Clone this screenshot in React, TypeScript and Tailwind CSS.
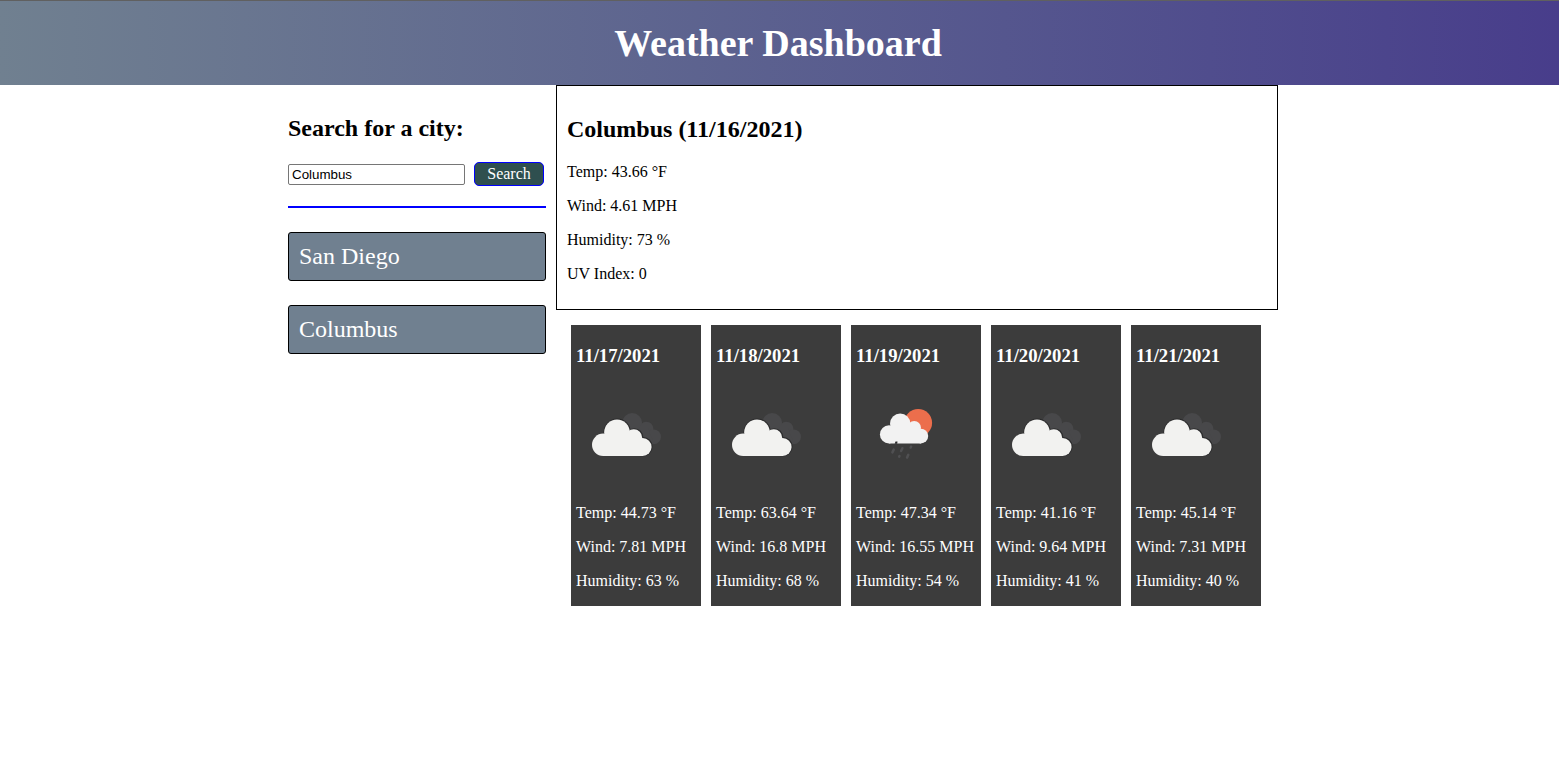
type Sky = "clouds" | "rain";

interface Forecast {
  date: string;
  sky: Sky;
  temp: string;
  wind: string;
  humidity: string;
}

const cities = ["San Diego", "Columbus"];

const current = ["Temp: 43.66 °F", "Wind: 4.61 MPH", "Humidity: 73 %", "UV Index: 0"];

const forecast: Forecast[] = [
  { date: "11/17/2021", sky: "clouds", temp: "44.73", wind: "7.81", humidity: "63" },
  { date: "11/18/2021", sky: "clouds", temp: "63.64", wind: "16.8", humidity: "68" },
  { date: "11/19/2021", sky: "rain", temp: "47.34", wind: "16.55", humidity: "54" },
  { date: "11/20/2021", sky: "clouds", temp: "41.16", wind: "9.64", humidity: "41" },
  { date: "11/21/2021", sky: "clouds", temp: "45.14", wind: "7.31", humidity: "40" },
];

function CloudsIcon() {
  return (
    <svg className="block size-[100px]" viewBox="0 0 100 100">
      <g fill="#48484a">
        <circle cx="56.2" cy="38.9" r="9.9" />
        <circle cx="70.4" cy="44.6" r="6.9" />
        <circle cx="77.6" cy="52.8" r="7.4" />
        <path d="M52 44H72L78 60H60Z" />
      </g>
      <g fill="#2a2a2b">
        <circle cx="41.2" cy="48" r="13.6" />
        <circle cx="58.2" cy="53.2" r="9" />
        <circle cx="67" cy="62.6" r="9.6" />
      </g>
      <g fill="#f2f2f0">
        <circle cx="27.2" cy="60.8" r="11.2" />
        <circle cx="41" cy="48.2" r="12.8" />
        <circle cx="57.8" cy="53.7" r="8.4" />
        <circle cx="66.6" cy="63" r="9" />
        <path d="M27 58L40 50H58L67 58V72H27Z" />
      </g>
    </svg>
  );
}

function RainIcon() {
  return (
    <svg className="block size-[100px]" viewBox="0 0 100 100">
      <circle cx="62.2" cy="38.8" r="13.9" fill="#ec6e4c" />
      <g fill="#f2f2f2">
        <circle cx="33" cy="50.4" r="9.1" />
        <circle cx="44.2" cy="39.7" r="10.2" />
        <circle cx="58.2" cy="43.8" r="6.8" />
        <circle cx="64.8" cy="52.1" r="7.4" />
        <path d="M33 46L43 41H58L65 48V59.5H33Z" />
      </g>
      <path d="M38.7 59.7L39.5 57.4H41.5L41.2 59.7Z" fill="#2a2a2b" />
      <g stroke="#505052" strokeWidth="2.5" strokeLinecap="round">
        <path d="M37.7 65.6L36.4 68.4" />
        <path d="M46.4 64.2L45.1 67" />
        <path d="M55.1 62.6L54.7 63.6" />
        <path d="M43.5 72L43.2 72.6" />
        <path d="M52.3 70.8L51.1 73.6" />
      </g>
    </svg>
  );
}

function ForecastCard({ day }: { day: Forecast }) {
  return (
    <article className="h-[281px] w-[130px] bg-[#3c3c3c] px-[5px] pt-5 text-white">
      <h3 className="h-[22px] text-[18.72px] leading-[22px] font-bold whitespace-nowrap">{day.date}</h3>
      <div className="mt-[17px] mb-5">{day.sky === "rain" ? <RainIcon /> : <CloudsIcon />}</div>
      <div className="flex flex-col gap-4 text-base leading-[18px] whitespace-nowrap">
        <p>Temp: {day.temp} °F</p>
        <p>Wind: {day.wind} MPH</p>
        <p>Humidity: {day.humidity} %</p>
      </div>
    </article>
  );
}

export default function App() {
  return (
    <div className="min-h-screen bg-white font-['Liberation_Serif','Times_New_Roman',serif] text-black">
      <header className="h-[85px] border-t border-[#606060] bg-linear-to-r from-[#708090] to-[#483d8b] pt-5 pr-[3px] text-center text-white">
        <h1 className="text-[38px] leading-[45px] font-bold">Weather Dashboard</h1>
      </header>
      <main className="flex gap-2.5 pl-72">
        <aside className="w-[258px] pt-[30px]">
          <h2 className="text-2xl leading-[27px] font-bold">Search for a city:</h2>
          <div className="mt-5 flex h-6 items-center gap-[9px]">
            <input
              className="mt-px h-[21px] w-[177px] rounded-[2px] border border-[#767676] bg-white px-[3px] font-['Liberation_Sans',Arial,sans-serif] text-[13.333px] outline-none"
              defaultValue="Columbus"
            />
            <button className="h-6 w-[70px] rounded-[5px] border border-[#0000ff] bg-[#2f4f4f] text-base leading-[22px] text-white">
              Search
            </button>
          </div>
          <hr className="mt-5 mb-6 border-0 border-t-2 border-[#0000ff]" />
          <ul className="flex flex-col gap-6">
            {cities.map((city) => (
              <li key={city} className="h-[49px] rounded-[3px] border border-black bg-[#708090] px-2.5 text-2xl leading-[47px] text-white">
                {city}
              </li>
            ))}
          </ul>
        </aside>
        <div className="w-[722px]">
          <section className="h-[225px] border border-black px-2.5 pt-[30px]">
            <h2 className="text-2xl leading-[27px] font-bold">Columbus (11/16/2021)</h2>
            <div className="mt-5 flex flex-col gap-4 text-base leading-[18px]">
              {current.map((line) => (
                <p key={line}>{line}</p>
              ))}
            </div>
          </section>
          <section className="mt-[15px] flex gap-2.5 pl-[15px]">
            {forecast.map((day) => (
              <ForecastCard key={day.date} day={day} />
            ))}
          </section>
        </div>
      </main>
    </div>
  );
}
